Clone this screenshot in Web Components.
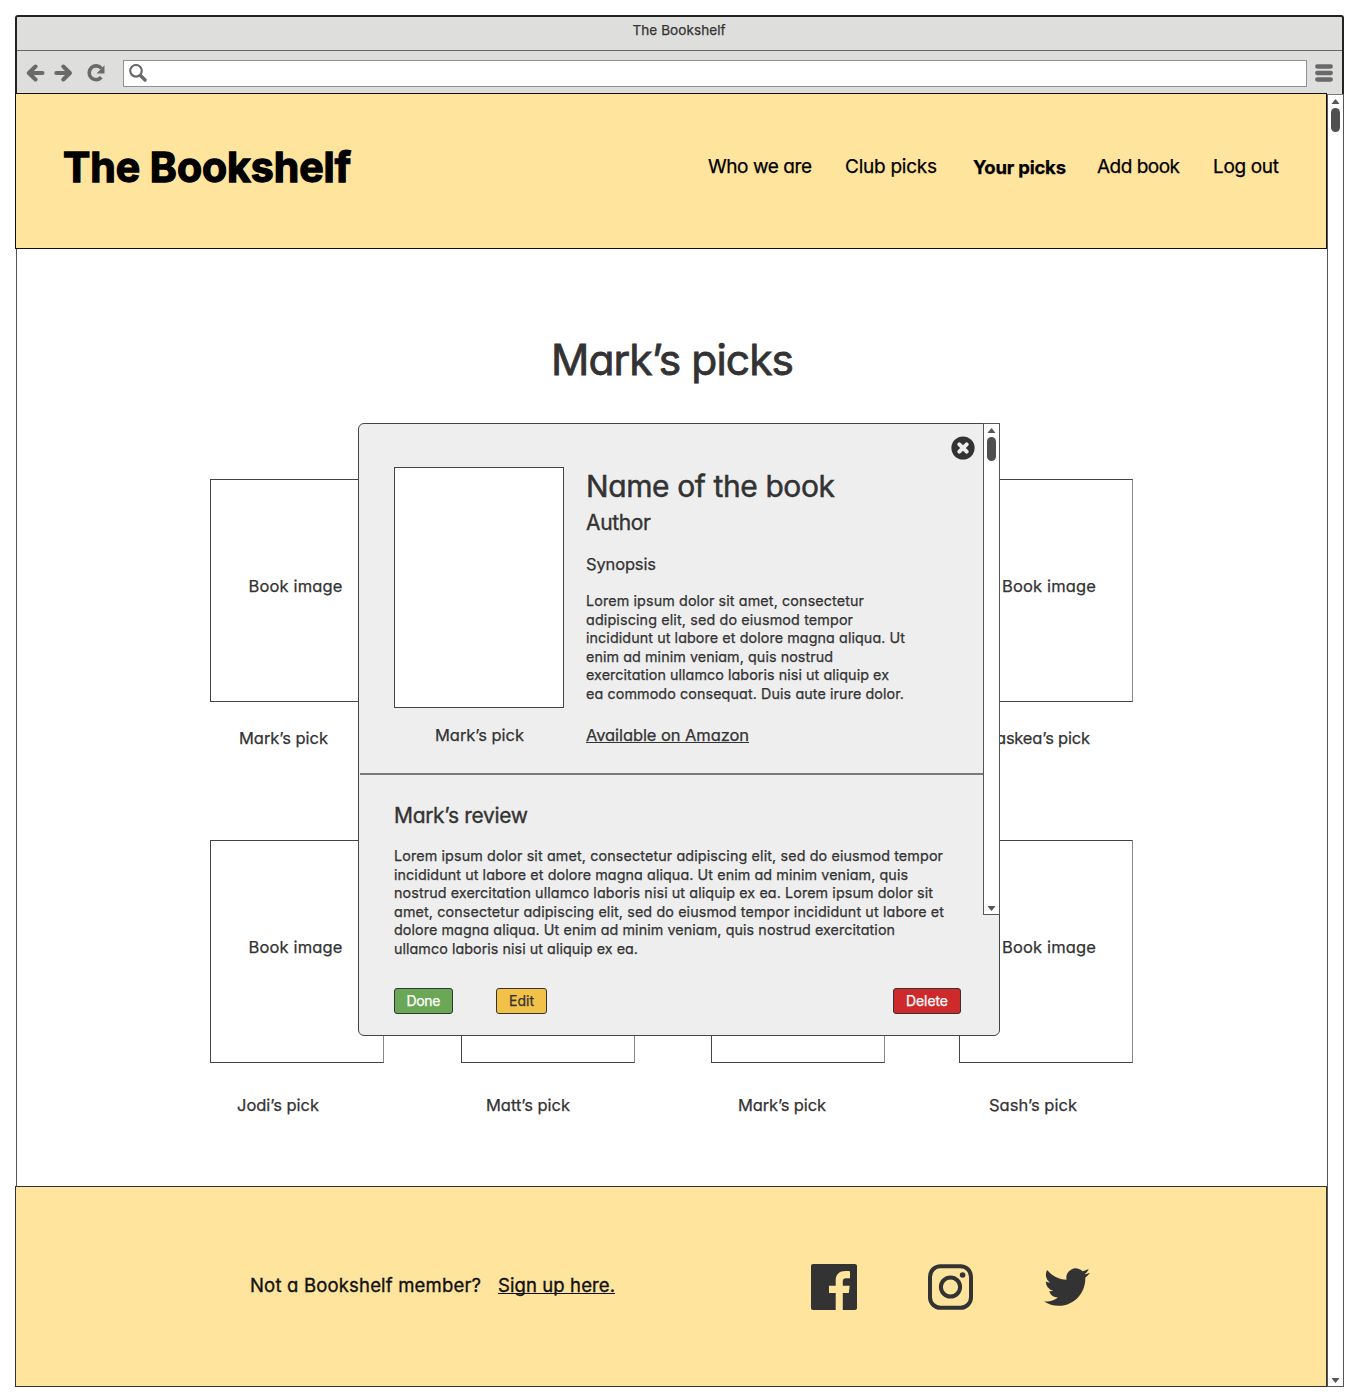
<!DOCTYPE html>
<html lang="en">
<head>
<meta charset="utf-8">
<title>The Bookshelf</title>
<style>
html,body{margin:0;background:#fff}
body{width:1360px;height:1400px;overflow:hidden;font-family:Inter,"Liberation Sans",sans-serif;font-feature-settings:"cv11";color:#333;-webkit-text-stroke:.25px}
</style>
</head>
<body>
<browser-window></browser-window>
<script>
class Base extends HTMLElement{
  connectedCallback(){
    if(this.shadowRoot)return;
    this.attachShadow({mode:"open"}).innerHTML="<style>*{box-sizing:border-box}"+this.css()+"</style>"+this.html();
    this.ready();
  }
  css(){return ""} html(){return "<slot></slot>"} ready(){}
}
const def=(n,c)=>customElements.define(n,c);

/* One line of text, tracked so that it spans the width given in "w". */
def("fit-line",class extends Base{
  css(){return `:host{display:block;flex:none;white-space:nowrap;width:${this.getAttribute("w")}px;${this.hasAttribute("s")?`font-size:${this.getAttribute("s")}px`:""}}
    span{display:inline-block}
    :host([link]) span{background:linear-gradient(currentColor,currentColor) 0 calc(50% + .45em)/100% 1px no-repeat}`}
  html(){return "<span><slot></slot></span>"}
  ready(){
    const s=this.shadowRoot.querySelector("span"),n=this.textContent.length,w=+this.getAttribute("w");
    const d=(w-s.getBoundingClientRect().width)/(n-1);
    s.style.letterSpacing=d+"px"; s.style.marginRight=-d+"px";
  }
});

def("scroll-bar",class extends Base{
  css(){return `:host{display:flex;flex-direction:column;align-items:center;box-sizing:border-box;width:17px;flex:none;background:#fff;border:1px solid #555;padding:4px 0 3px}
    i{width:9px;height:24px;border-radius:4.5px;background:#4f4f4f;margin-top:4px}
    svg{display:block;fill:#555}.d{margin-top:auto}`}
  html(){return `<svg width="9" height="5"><path d="M.5 5 4 .6q.5-.5 1 0L8.500 5z"/></svg><i></i><svg class="d" width="9" height="5"><path d="M.5 0 4 4.400q.5.5 1 0L8.500 0z"/></svg>`}
});

def("browser-bar",class extends Base{
  css(){return `:host{display:block;box-sizing:border-box;height:79px;background:#dededd;border:solid #222;border-width:2px 2px 0;border-radius:3px 3px 0 0}
    .t{height:34px;border-bottom:1px solid #666;display:flex;justify-content:center;line-height:27px;padding-right:1px;color:#333}
    .n{height:45px;display:flex;align-items:center;padding:0 9px 1px;color:#6a6a6a}
    .u{margin-left:17px;flex:1;height:27px;margin-right:8px;background:#fff;border:1.500px solid #909290;padding:3px 4px}
    svg{display:block;fill:none;stroke:#6a6a6a;stroke-linecap:round;stroke-linejoin:round;flex:none}`}
  html(){return `<div class="t"><fit-line w="93" s="13.500">The Bookshelf</fit-line></div>
  <div class="n">
   <svg width="19" height="20" stroke-width="4"><path d="M9.500 3.500 2.800 10 9.500 16.500M4 10H16.500"/></svg>
   <svg width="19" height="20" stroke-width="4" style="margin-left:9px"><path d="M9.300 3.500 16 10 9.300 16.500M15 10H2.300"/></svg>
   <svg width="20" height="20" stroke-width="3.600" style="margin-left:13px;stroke-linecap:butt"><path d="M15.500 5.500A6.900 6.900 0 1 0 15.300 14.300"/><path d="M18.500 2.300V10.500h-7.900z" fill="#6a6a6a" stroke="none"/></svg>
   <div class="u"><svg width="19" height="19"><circle cx="8" cy="6.800" r="5.800" stroke-width="2.200"/><path d="M12.500 11.500 17 16" stroke-width="3.400"/></svg></div>
   <svg width="18" height="20" stroke-width="4.300"><path d="M2.200 3.500H15.800M2.200 10H15.800M2.200 16.500H15.800"/></svg>
  </div>`}
});

def("site-header",class extends Base{
  css(){return `:host{display:flex;box-sizing:border-box;height:156px;background:#ffe49e;border:1px solid #111;padding:0 47px 8px 47px;align-items:center;justify-content:space-between;color:#000}
    nav{display:flex;font-size:19px;line-height:24px}h1{margin:0;font-size:41px;line-height:50px;font-weight:700;-webkit-text-stroke:1.300px #000}b{font-weight:700;font-size:18.500px;margin:0 31px 0 36px}`}
  html(){return `<h1><fit-line w="288">The Bookshelf</fit-line></h1>
   <nav><fit-line w="104" style="margin-right:33px">Who we are</fit-line><fit-line w="92">Club picks</fit-line><b><fit-line w="93">Your picks</fit-line></b><fit-line w="83" style="margin-right:33px">Add book</fit-line><fit-line w="66">Log out</fit-line></nav>`}
});

def("book-card",class extends Base{
  css(){return `:host{display:block;width:174px;flex:none}
    .b{height:223px;border:1px solid #444;border-right-color:#888;background:#fff;display:flex;justify-content:center;align-items:center;padding:0 3px 9px 0;font-size:16.500px}
    :host([shift]) .b{padding:0 0 9px 6px}
    .c{height:24px;font-size:16.500px;line-height:24px;margin-top:var(--gap);padding-left:var(--x)}`}
  html(){return `<div class="b"><slot></slot></div><div class="c"><slot name="by"></slot></div>`}
});

def("pick-shelf",class extends Base{
  css(){return `:host{display:block;flex:1}
    h2{margin:91px 0 0;display:flex;font-weight:400;font-size:42.500px;line-height:40px;padding-left:534px;-webkit-text-stroke:.8px}
    .r{display:flex;padding-left:193px;--gap:24px;margin-top:99px}
    .r+.r{--gap:30px;margin-top:90px}
    book-card{margin-right:77px}book-card:nth-child(2){margin-right:76px}book-card:nth-child(3){margin-right:74px}`}
  html(){
    const im='<fit-line w="94">Book image</fit-line>';
    const card=(x,w,t,l)=>`<book-card ${x>29?"shift":""} style="--x:${x}px">${l?im:""}${t?`<fit-line slot="by" w="${w}">${t}</fit-line>`:""}</book-card>`;
    return `<h2><fit-line w="243">Mark’s picks</fit-line></h2>
    <div class="r">${card(29,89,"Mark’s pick",1)}${card(0,0,"",0)}${card(0,0,"",0)}${card(37,94,"askea’s pick",1)}</div>
    <div class="r">${card(27,82,"Jodi’s pick",1)}${card(25,84,"Matt’s pick",0)}${card(27,88,"Mark’s pick",0)}${card(30,88,"Sash’s pick",1)}</div>`}
});

def("site-footer",class extends Base{
  css(){return `:host{display:flex;box-sizing:border-box;height:201px;background:#ffe49e;border:1px solid #333;align-items:center;padding:0 0 3px 234px;color:#111;font-size:18.500px;line-height:26px;-webkit-text-stroke:.35px}
    svg{fill:#333;display:block;flex:none}.i{display:flex;margin-left:196px;gap:71px;padding-top:3px}`}
  html(){return `<fit-line w="231" style="margin-right:17px">Not a Bookshelf member?</fit-line><fit-line w="117" link>Sign up here.</fit-line>
   <div class="i">
    <svg width="46" height="46" viewBox="0 0 46 46"><path d="M2 0h42A2 2 0 0 1 46 2v42a2 2 0 0 1-2 2H31.800V29h6l.9-7.300H31.800V17.500c0-2.300 1-3.300 3.500-3.300H39V7.300c-.7-.1-2.600-.2-4.500-.2-6 0-9.800 3.200-9.800 9.400v5.200H18V29h6.700V46H2A2 2 0 0 1 0 44V2A2 2 0 0 1 2 0z"/></svg>
    <svg width="45" height="46" viewBox="0 0 45 46"><rect x="2" y="2.200" width="41" height="41.600" rx="10.500" fill="none" stroke="#333" stroke-width="4"/><circle cx="22.500" cy="23" r="9.600" fill="none" stroke="#333" stroke-width="4"/><circle cx="34.600" cy="11" r="2.800"/></svg>
    <svg width="46" height="46" viewBox="0 0 24 24"><path d="M23.950 4.570a10 10 0 0 1-2.820.77 4.960 4.960 0 0 0 2.160-2.720c-.95.550-2 .950-3.130 1.180a4.920 4.920 0 0 0-8.380 4.480C7.690 8.090 4.070 6.130 1.640 3.160a4.920 4.920 0 0 0 1.520 6.570 4.900 4.900 0 0 1-2.230-.61v.06a4.920 4.920 0 0 0 3.950 4.830 5 5 0 0 1-2.210.08 4.940 4.940 0 0 0 4.600 3.420A9.870 9.870 0 0 1 0 19.540a13.990 13.990 0 0 0 7.550 2.210c9.050 0 14-7.500 14-13.980 0-.21 0-.42-.02-.63a9.940 9.940 0 0 0 2.460-2.550z"/></svg>
   </div>`}
});

def("tag-button",class extends Base{
  css(){return `:host{display:flex;box-sizing:border-box;height:26px;border:1px solid #333;border-radius:3px;justify-content:center;font-size:14px;line-height:23px;color:#fff}`}
});

def("book-dialog",class extends Base{
  css(){return `:host{display:flex;flex-direction:column;box-sizing:border-box;position:absolute;left:358px;top:423px;width:642px;height:613px;background:#eee;border:1.500px solid #444;border-radius:6px;color:#333}
    scroll-bar{position:absolute;right:-1px;top:-1px;height:492px}
    .x{position:absolute;left:592px;top:12px;display:block}
    .top{height:349px;display:flex;gap:22px;padding:43px 0 0 35px;width:626px}
    .pic{width:170px;height:241px;background:#fff;border:1px solid #444}
    .cap{padding:15px 0 0 41px;font-size:16.500px;line-height:24px}
    h2,h3,h4{font-weight:400;margin:0}
    h2{font-size:30px;line-height:38px;-webkit-text-stroke:.5px}
    h3{font-size:21px;line-height:26px;-webkit-text-stroke:.35px}h4{font-size:16.500px;line-height:24px}
    p{margin:0;font-size:14.300px;line-height:18.500px}
    hr{margin:0 0 0 1px;border:0;height:2px;background:#7b7b7b;width:625px}
    .bot{padding:28px 38px 0 35px}
    .btns{display:flex;margin-top:30px}`}
  html(){
    const lines=a=>a.map(([w,t])=>`<fit-line w="${w}">${t}</fit-line>`).join("");
    return `<div class="top"><div><div class="pic"></div><div class="cap"><fit-line w="89">Mark’s pick</fit-line></div></div>
    <div><h2><fit-line w="249">Name of the book</fit-line></h2>
     <h3 style="margin-top:5px"><fit-line w="65">Author</fit-line></h3>
     <h4 style="margin-top:16px"><fit-line w="70">Synopsis</fit-line></h4>
     <p style="margin-top:16px">${lines([[278,"Lorem ipsum dolor sit amet, consectetur"],[267,"adipiscing elit, sed do eiusmod tempor"],[319,"incididunt ut labore et dolore magna aliqua. Ut"],[247,"enim ad minim veniam, quis nostrud"],[303,"exercitation ullamco laboris nisi ut aliquip ex"],[318,"ea commodo consequat. Duis aute irure dolor."]])}</p>
     <h4 style="margin-top:20px"><fit-line w="163" link>Available on Amazon</fit-line></h4></div></div>
    <hr>
    <div class="bot"><h3><fit-line w="134">Mark’s review</fit-line></h3>
     <p style="margin-top:18px">${lines([[549,"Lorem ipsum dolor sit amet, consectetur adipiscing elit, sed do eiusmod tempor"],[514,"incididunt ut labore et dolore magna aliqua. Ut enim ad minim veniam, quis"],[539,"nostrud exercitation ullamco laboris nisi ut aliquip ex ea. Lorem ipsum dolor sit"],[550,"amet, consectetur adipiscing elit, sed do eiusmod tempor incididunt ut labore et"],[501,"dolore magna aliqua. Ut enim ad minim veniam, quis nostrud exercitation"],[244,"ullamco laboris nisi ut aliquip ex ea."]])}</p>
     <div class="btns"><tag-button style="width:59px;background:#6aa756"><fit-line w="34">Done</fit-line></tag-button><tag-button style="width:51px;background:#f1c247;color:#333;margin-left:43px"><fit-line w="25">Edit</fit-line></tag-button><tag-button style="width:68px;background:#cf2a2b;margin-left:auto"><fit-line w="42">Delete</fit-line></tag-button></div></div>
    <svg class="x" width="24" height="24"><circle cx="12" cy="12" r="11.600" fill="#333"/><path d="M8.300 8.300l7.400 7.400M15.700 8.300l-7.400 7.400" stroke="#eee" stroke-width="4" stroke-linecap="round"/></svg>
    <scroll-bar></scroll-bar>`}
});

def("browser-window",class extends Base{
  css(){return `:host{display:block;padding:15px 16px 0 15px}
    .m{display:flex;height:1294px;margin-top:-1px}
    .page{flex:1;display:flex;flex-direction:column}
    pick-shelf{border-left:1.500px solid #555;margin:0 0 0 1px}
    .m>scroll-bar{margin-top:1px;border-top-color:#777}`}
  html(){return `<browser-bar></browser-bar><div class="m"><div class="page"><site-header></site-header><pick-shelf></pick-shelf><site-footer></site-footer></div><scroll-bar></scroll-bar></div><book-dialog></book-dialog>`}
});
</script>
</body>
</html>
